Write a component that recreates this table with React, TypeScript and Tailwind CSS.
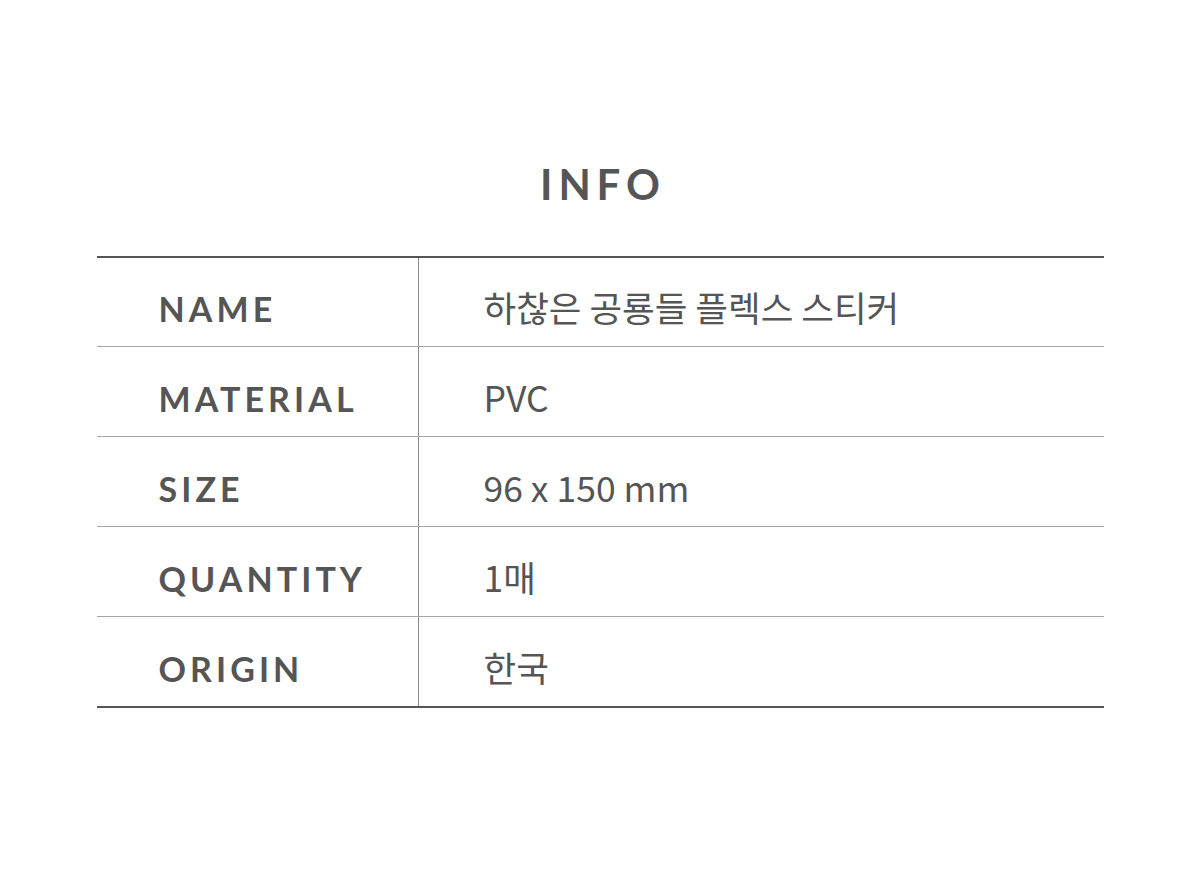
const rows = [
  { label: 'NAME', value: '하찮은 공룡들 플렉스 스티커' },
  { label: 'MATERIAL', value: 'PVC' },
  { label: 'SIZE', value: '96 x 150 mm' },
  { label: 'QUANTITY', value: '1매' },
  { label: 'ORIGIN', value: '한국' },
];

export default function App() {
  return (
    <div className="w-[1200px] h-[871px] bg-white pt-[163px]">
      <h1 className="text-center text-[42px] leading-none font-bold tracking-[0.14em] pl-[0.14em] text-[#555] font-['Lato',sans-serif]">
        INFO
      </h1>

      <div className="mx-auto mt-[51px] w-[1007px] border-t-2 border-b-2 border-[#555]">
        {rows.map((row, i) => {
          const first = i === 0;
          const last = i === rows.length - 1;
          return (
            <div
              key={row.label}
              className={`flex ${first || last ? 'h-[89px]' : 'h-[90px]'} ${last ? '' : 'border-b border-[#a6a6a6]'}`}
            >
              <div className="w-[322px] shrink-0 flex items-center pt-[14px] pl-[62px] border-r border-[#8a8a8a]">
                <span className="text-[34px] leading-none font-bold tracking-[0.12em] text-[#555] font-['Lato',sans-serif]">
                  {row.label}
                </span>
              </div>
              <div className="flex-1 flex items-center pt-[10px] pl-[65px]">
                <span className="text-[35.5px] leading-none text-[#555] font-['Noto_Sans_CJK_KR','Noto_Sans',sans-serif]">
                  {row.value}
                </span>
              </div>
            </div>
          );
        })}
      </div>
    </div>
  );
}
